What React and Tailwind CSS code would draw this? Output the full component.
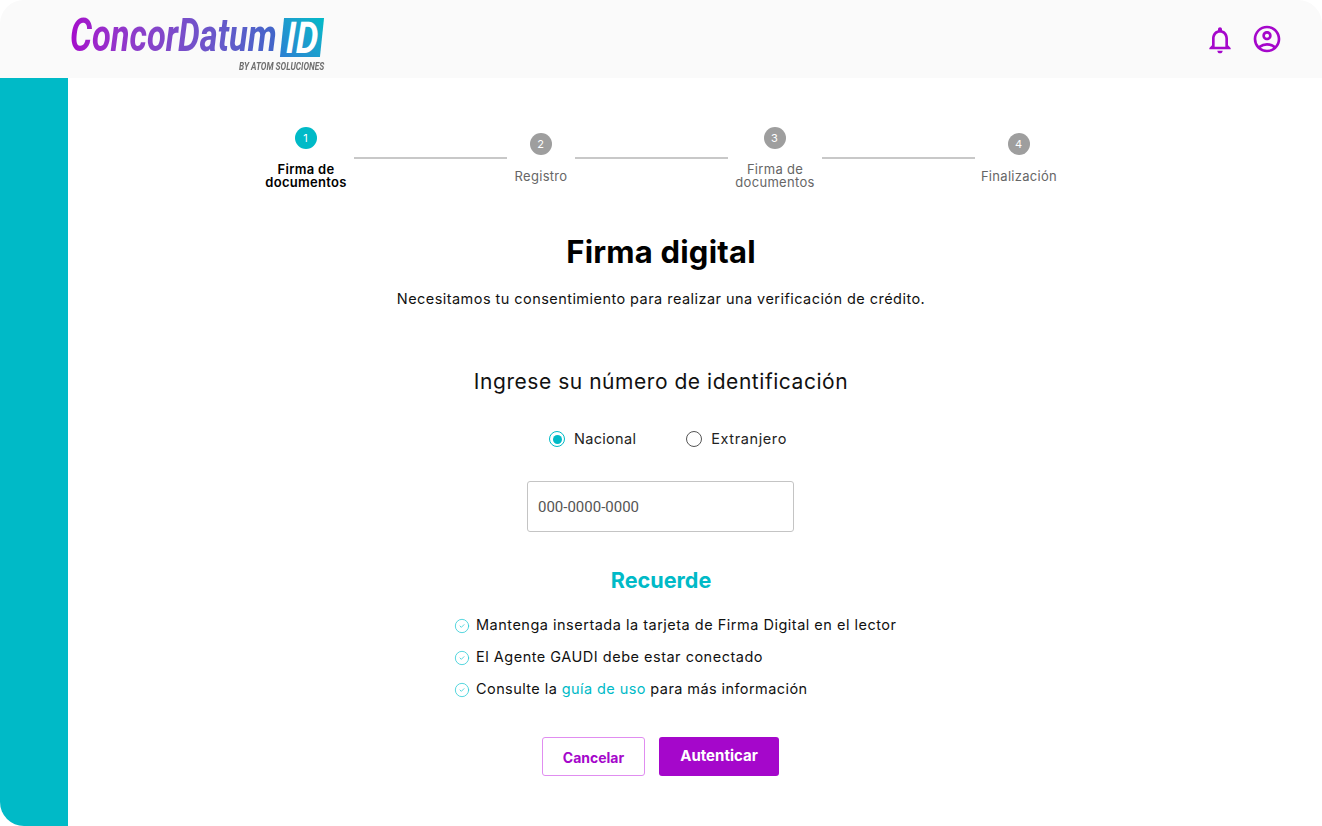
import React from "react";
import { MdOutlineNotifications, MdOutlineAccountCircle } from "react-icons/md";
import { CircleCheck } from "lucide-react";

const font = "font-['Inter','Liberation_Sans',sans-serif]";

const steps = [
  { n: 1, label: ["Firma de", "documentos"], width: "w-[96px]", active: true },
  { n: 2, label: ["Registro"], width: "w-[68px]" },
  { n: 3, label: ["Firma de", "documentos"], width: "w-[94px]" },
  { n: 4, label: ["Finalización"], width: "w-[88px]" },
];

const Logo = () => (
  <div className="mt-[12px] flex w-[252px] flex-col items-end font-['Roboto','Liberation_Sans',sans-serif] italic">
    <div className="flex h-[39px] w-full items-center justify-between">
      <div className="w-[206px]">
        <span className="inline-block origin-left scale-x-[0.75] whitespace-nowrap bg-gradient-to-r from-[#a507cb] to-[#3f66c9] bg-clip-text text-[46px] leading-[39px] font-bold text-transparent">
          ConcorDatum
        </span>
      </div>
      <div className="flex h-[39px] w-[40px] -skew-x-6 items-center justify-center bg-gradient-to-tr from-[#2a7fd2] to-[#00bac7]">
        <span className="origin-center scale-x-[0.8] text-[44px] leading-none font-bold text-white skew-x-6">ID</span>
      </div>
    </div>
    <span className="mt-[3px] -mr-[2px] origin-right scale-x-[0.76] text-[11px] leading-[13px] font-bold whitespace-nowrap text-[#6f6f6f]">
      BY ATOM SOLUCIONES
    </span>
  </div>
);

const Step = ({ n, label, width, active }) => (
  <div className={`flex ${width} flex-col items-center`}>
    <div
      className={`flex h-[22px] w-[22px] items-center justify-center rounded-full text-[11px] text-white ${
        active ? "bg-[#00bac7]" : "bg-[#9e9e9e]"
      }`}
    >
      {n}
    </div>
    <div
      className={`pl-[1px] text-center text-[13px] leading-[13px] tracking-[0.3px] whitespace-nowrap ${
        label.length > 1 ? "mt-[14px]" : "mt-[15px]"
      } ${active ? "font-semibold text-black" : "text-[#666666]"}`}
    >
      {label[0]}
      {label[1] && <br />}
      {label[1]}
    </div>
  </div>
);

const Radio = ({ label, checked }) => (
  <div className="flex items-center gap-[9px]">
    <span
      className={`flex h-[16px] w-[16px] items-center justify-center rounded-full border-[1.5px] ${
        checked ? "border-[#00bac7]" : "border-[#555555]"
      }`}
    >
      {checked && <span className="h-[9px] w-[9px] rounded-full bg-[#00bac7]" />}
    </span>
    <span className={`text-[14.5px] text-[#222222] ${checked ? "tracking-[0.3px]" : "tracking-[0.6px]"}`}>{label}</span>
  </div>
);

const Remember = ({ children, className = "" }) => (
  <li className={`flex h-[32px] items-center gap-[6px] whitespace-nowrap ${className}`}>
    <CircleCheck size={16} strokeWidth={1.2} className="mt-[2px] shrink-0 text-[#2ccbd6]" />
    <span>{children}</span>
  </li>
);

export default function App() {
  return (
    <div className={`flex h-[826px] w-[1322px] flex-col overflow-hidden rounded-[24px] bg-white ${font}`}>
      <header className="flex h-[78px] shrink-0 items-center justify-between bg-[#fafafa] pr-[39px] pl-[70px]">
        <Logo />
        <div className="flex items-center gap-[15px] text-[#a507cb]">
          <MdOutlineNotifications size={32} className="mt-[1px]" />
          <MdOutlineAccountCircle size={32} />
        </div>
      </header>

      <div className="flex flex-1">
        <aside className="w-[68px] shrink-0 bg-[#00bac7]" />

        <main className="flex flex-1 flex-col items-center pt-[49px] pr-[68px]">
          <div className="mr-[2px] flex items-center">
            {steps.map((step, i) => (
              <React.Fragment key={step.n}>
                <Step {...step} />
                {i < steps.length - 1 && <div className="h-[2px] w-[153px] bg-[#c8c8c8]" />}
              </React.Fragment>
            ))}
          </div>

          <h1 className="mt-[44px] text-[31px] leading-[38px] font-bold tracking-[0.2px] text-black">Firma digital</h1>
          <p className="mt-[18px] text-[14.5px] leading-[20px] tracking-[0.45px] text-[#111111]">
            Necesitamos tu consentimiento para realizar una verificación de crédito.
          </p>

          <h2 className="mt-[58px] text-[21px] leading-[30px] tracking-[0.54px] text-[#111111]">
            Ingrese su número de identificación
          </h2>

          <div className="mt-[30px] ml-[14px] flex h-[24px] items-center gap-[50px]">
            <Radio label="Nacional" checked />
            <Radio label="Extranjero" />
          </div>

          <div className="mt-[30px] mr-[1px] flex h-[51px] w-[267px] items-center rounded-[3px] border border-[#c4c4c4] px-[10px] pt-[2px] font-['Roboto',sans-serif] text-[15px] text-[#555555]">
            000-0000-0000
          </div>

          <h3 className="mt-[33px] text-[21.6px] leading-[30px] font-bold text-[#00bac7]">Recuerde</h3>

          <ul className="mt-[14px] w-[414px] text-[14.5px] tracking-[0.5px] text-[#111111]">
            <Remember>Mantenga insertada la tarjeta de Firma Digital en el lector</Remember>
            <Remember>El Agente GAUDI debe estar conectado</Remember>
            <Remember className="tracking-[0.42px]">
              Consulte la <span className="text-[#00bac7]">guía de uso</span> para más información
            </Remember>
          </ul>

          <div className="mt-[32px] mr-[1px] flex gap-[14px] font-bold">
            <button className="h-[39px] w-[103px] rounded-[3px] border border-[#e08df0] bg-white pt-[1px] text-[14px] text-[#a507cb]">
              Cancelar
            </button>
            <button className="h-[39px] w-[120px] rounded-[3px] bg-[#a507cb] text-[15px] text-white">Autenticar</button>
          </div>
        </main>
      </div>
    </div>
  );
}
